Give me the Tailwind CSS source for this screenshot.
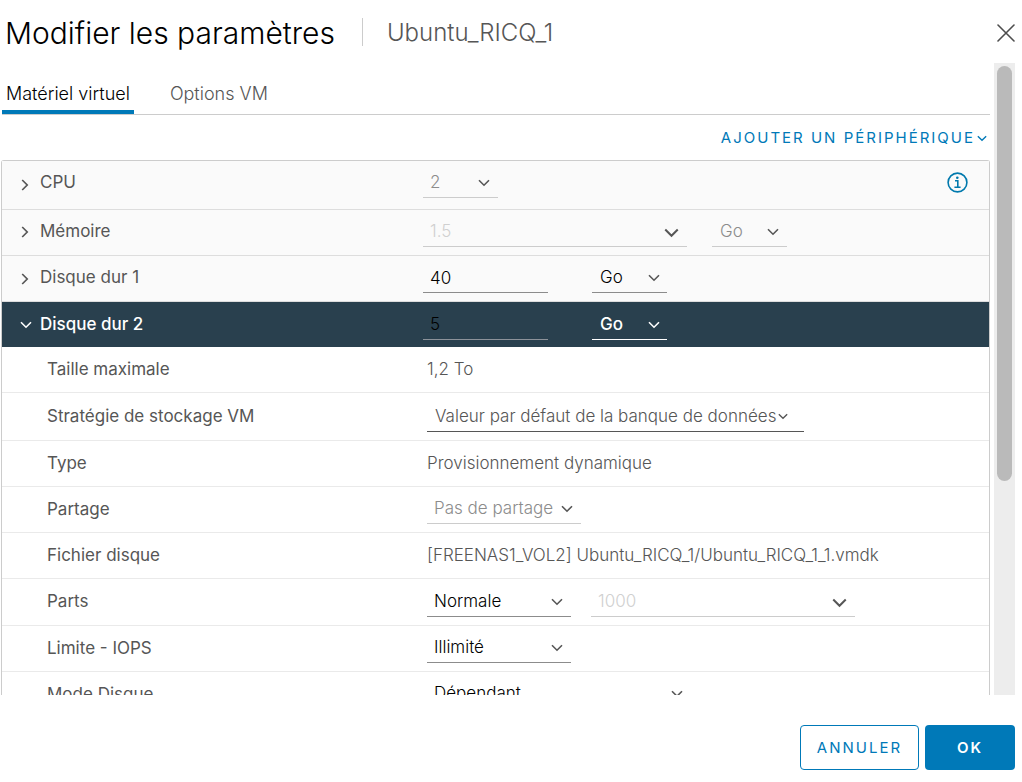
<!DOCTYPE html>
<html lang="fr">
<head>
<meta charset="utf-8">
<meta name="viewport" content="width=device-width, initial-scale=1">
<title>Modifier les paramètres</title>
<script src="https://cdn.jsdelivr.net/npm/@tailwindcss/browser@4"></script>
</head>
<body class="bg-white font-['Inter',sans-serif] text-[17px] text-[#565656]">
<svg class="hidden">
  <symbol id="down" viewBox="0 0 12 8"><path d="M1 1.2 6 6.2l5-5" fill="none" stroke="currentColor" stroke-width="1.6"/></symbol>
  <symbol id="right" viewBox="0 0 8 12"><path d="M1.2 1l5 5-5 5" fill="none" stroke="currentColor" stroke-width="1.7"/></symbol>
</svg>
<div class="flex h-screen flex-col">
  <header class="flex h-[63px] shrink-0 items-start pt-[17px] pr-[7px] pl-[5px]">
    <h1 class="text-[30px] leading-8 font-light text-black">Modifier les paramètres</h1>
    <div class="mt-px ml-[27px] h-7 border-l border-[#ccc] pl-6 text-2xl leading-[30px] font-light">Ubuntu_RICQ_1</div>
    <button type="button" aria-label="Fermer" class="mt-[7px] ml-auto">
      <svg class="size-[18px]" viewBox="0 0 18 18"><path d="M1 1l16 16M17 1L1 17" stroke="#4d4d4d" stroke-width="1.6" fill="none" stroke-linecap="round"/></svg>
    </button>
  </header>

  <div class="flex min-h-0 flex-1 justify-between gap-1 pr-[7px] pl-px">
    <main class="flex min-w-0 flex-1 flex-col overflow-hidden">
      <nav role="tablist" class="ml-px flex h-[52px] shrink-0 gap-9 border-b border-[#ccc]">
        <button type="button" role="tab" aria-selected="true" class="h-[51px] border-b-4 border-[#0079b8] px-1 pt-[14px] text-lg font-light text-black">Matériel virtuel</button>
        <button type="button" role="tab" aria-selected="false" class="h-[51px] border-b-4 border-transparent pt-[14px] text-lg font-light">Options VM</button>
      </nav>
      <div class="flex h-[45px] shrink-0 items-center justify-end pt-0.5 pr-[3px]">
        <button type="button" class="flex items-center gap-0.5 text-[15px] tracking-[2px] text-[#0079b8]">AJOUTER UN PÉRIPHÉRIQUE<svg class="h-[7px] w-[10px]"><use href="#down"/></svg></button>
      </div>

      <div class="shrink-0 rounded-t-[3px] border border-b-0 border-[#ccc]">
        <section class="flex h-[49px] border-b border-[#ddd] bg-[#fafafa] pt-1.5">
          <button type="button" class="flex h-8 w-[421px] shrink-0 items-center gap-[11px] pl-[19px]"><svg class="mt-1 h-3 w-2"><use href="#right"/></svg>CPU</button>
          <div class="relative w-[75px]">
            <select aria-label="CPU" disabled class="h-[31px] w-full appearance-none border-b border-[#ccc] pt-0.5 pl-[7px] font-light text-[#8c8c8c] opacity-100"><option>2</option></select>
            <svg class="pointer-events-none absolute top-3 right-2 h-2 w-3"><use href="#down"/></svg>
          </div>
          <button type="button" aria-label="Informations" class="mr-[21px] ml-auto flex h-[31px] items-center text-[#0079ad]">
            <svg class="size-[21px]" viewBox="0 0 21 21" fill="none" stroke="currentColor"><circle cx="10.5" cy="10.5" r="9.4" stroke-width="1.6"/><path d="M8 8.8h2.8v6.4M7.4 15.3h6.2" stroke-width="1.6"/><circle cx="10.3" cy="5.7" r="1.3" fill="currentColor" stroke="none"/></svg>
          </button>
        </section>

        <section class="flex h-[46px] border-b border-[#ddd] bg-[#fafafa] pt-1.5">
          <button type="button" class="flex h-8 w-[421px] shrink-0 items-center gap-[11px] pl-[19px]"><svg class="h-3 w-2"><use href="#right"/></svg>Mémoire</button>
          <div class="relative w-[264px]">
            <input aria-label="Mémoire" disabled value="1.5" class="h-[31px] w-full border-b border-[#ccc] pl-[7px] font-light text-[#d0d0d0]">
            <svg class="pointer-events-none absolute top-3 right-2 h-[10px] w-[15px]"><use href="#down"/></svg>
          </div>
          <div class="relative ml-[25px] w-[75px]">
            <select aria-label="Unité de mémoire" disabled class="h-[31px] w-full appearance-none border-b border-[#ccc] pt-0.5 pl-2 font-light text-[#8c8c8c] opacity-100"><option>Go</option></select>
            <svg class="pointer-events-none absolute top-3 right-2 h-2 w-3"><use href="#down"/></svg>
          </div>
        </section>

        <section class="flex h-[46px] border-b border-[#ddd] bg-[#fafafa] pt-1.5">
          <button type="button" class="flex h-8 w-[421px] shrink-0 items-center gap-[11px] pl-[19px]"><svg class="mt-0.5 h-3 w-2"><use href="#right"/></svg>Disque dur 1</button>
          <input aria-label="Taille du disque dur 1" value="40" class="h-[31px] w-[125px] border-b border-[#8c8c8c] pt-0.5 pl-[7px] font-light text-black">
          <div class="relative ml-11 w-[75px]">
            <select aria-label="Unité du disque dur 1" class="h-[31px] w-full appearance-none border-b border-[#8c8c8c] pt-0.5 pl-2 font-light text-black"><option>Go</option></select>
            <svg class="pointer-events-none absolute top-3 right-[7px] h-2 w-3"><use href="#down"/></svg>
          </div>
        </section>

        <section class="flex h-[45px] bg-[#29404e] pt-[7px] text-white">
          <button type="button" class="flex h-8 w-[421px] shrink-0 items-center gap-2 pl-[18px] font-medium"><svg class="h-2 w-3"><use href="#down"/></svg>Disque dur 2</button>
          <input aria-label="Taille du disque dur 2" disabled value="5" class="h-[31px] w-[125px] border-b border-[#8c9299] pl-[7px] font-light text-black">
          <div class="relative ml-11 w-[75px]">
            <select aria-label="Unité du disque dur 2" class="h-[31px] w-full appearance-none border-b border-white pt-0.5 pl-2 font-medium"><option>Go</option></select>
            <svg class="pointer-events-none absolute top-3 right-[7px] h-2 w-3"><use href="#down"/></svg>
          </div>
        </section>

        <dl class="leading-[33px] font-light">
          <div class="flex h-[46px] border-b border-[#eaeaea] pt-1.5">
            <dt class="w-[425px] shrink-0 pl-[45px] font-normal">Taille maximale</dt>
            <dd>1,2 To</dd>
          </div>
          <div class="flex h-12 border-b border-[#eaeaea] pt-2">
            <dt class="w-[425px] shrink-0 pl-[45px] leading-[31px] font-normal"><label for="policy">Stratégie de stockage VM</label></dt>
            <dd class="relative w-[377px]">
              <select id="policy" class="block h-[31px] w-full appearance-none border-b border-[#565656] pl-2 leading-6"><option>Valeur par défaut de la banque de données</option></select>
              <svg class="pointer-events-none absolute top-3 right-4 h-[7px] w-[10px]"><use href="#down"/></svg>
            </dd>
          </div>
          <div class="flex h-[46px] border-b border-[#eaeaea] pt-1.5">
            <dt class="w-[425px] shrink-0 pl-[45px] font-normal">Type</dt>
            <dd>Provisionnement dynamique</dd>
          </div>
          <div class="flex h-[46px] border-b border-[#eaeaea] pt-1.5">
            <dt class="w-[425px] shrink-0 pl-[45px] font-normal"><label for="sharing">Partage</label></dt>
            <dd class="relative w-[154px]">
              <select id="sharing" disabled class="block h-[31px] w-full appearance-none border-b border-[#ccc] pl-[7px] leading-6 text-[#8c8c8c] opacity-100"><option>Pas de partage</option></select>
              <svg class="pointer-events-none absolute top-3 right-2 h-2 w-3"><use href="#down"/></svg>
            </dd>
          </div>
          <div class="flex h-[46px] border-b border-[#eaeaea] pt-1.5">
            <dt class="w-[425px] shrink-0 pl-[45px] font-normal">Fichier disque</dt>
            <dd>[FREENAS1_VOL2] Ubuntu_RICQ_1/Ubuntu_RICQ_1_1.vmdk</dd>
          </div>
          <div class="flex h-[47px] border-b border-[#eaeaea] pt-[7px]">
            <dt class="w-[425px] shrink-0 pl-[45px] leading-[31px] font-normal"><label for="shares">Parts</label></dt>
            <dd class="relative w-36">
              <select id="shares" class="block h-[31px] w-full appearance-none border-b border-[#8c8c8c] pl-[7px] leading-6 text-black"><option>Normale</option></select>
              <svg class="pointer-events-none absolute top-3 right-2 h-2 w-3"><use href="#down"/></svg>
            </dd>
            <dd class="relative ml-5 w-[264px]">
              <input aria-label="Nombre de parts" disabled value="1000" class="block h-[31px] w-full border-b border-[#ccc] pl-[7px] leading-6 text-[#d0d0d0]">
              <svg class="pointer-events-none absolute top-3 right-2 h-[10px] w-[15px]"><use href="#down"/></svg>
            </dd>
          </div>
          <div class="flex h-[46px] border-b border-[#eaeaea] pt-1.5">
            <dt class="w-[425px] shrink-0 pl-[45px] font-normal"><label for="limit">Limite - IOPS</label></dt>
            <dd class="relative w-36">
              <select id="limit" class="block h-[31px] w-full appearance-none border-b border-[#8c8c8c] pl-[7px] leading-6 text-black"><option>Illimité</option></select>
              <svg class="pointer-events-none absolute top-3 right-2 h-2 w-3"><use href="#down"/></svg>
            </dd>
          </div>
          <div class="flex h-[46px] border-b border-[#eaeaea] pt-1.5">
            <dt class="w-[425px] shrink-0 pl-[45px] font-normal"><label for="mode">Mode Disque</label></dt>
            <dd class="relative w-[264px]">
              <select id="mode" class="block h-[31px] w-full appearance-none border-b border-[#8c8c8c] pl-[7px] leading-6 text-black"><option>Dépendant</option></select>
              <svg class="pointer-events-none absolute top-3 right-2 h-2 w-3"><use href="#down"/></svg>
            </dd>
          </div>
        </dl>
      </div>
    </main>
    <div class="w-[21px] shrink-0 bg-[#ededed] px-[3px] pt-[3px]" aria-hidden="true"><div class="h-[66%] rounded-full bg-[#bababa]"></div></div>
  </div>

  <footer class="flex h-[87px] shrink-0 items-start justify-end gap-1.5 pt-[30px] pr-[7px]">
    <button type="button" class="h-[45px] w-[119px] rounded-[4px] border border-[#0079b8] pt-0.5 text-[15px] tracking-[2px] text-[#0079b8]">ANNULER</button>
    <button type="button" class="h-[45px] w-[90px] rounded-[4px] bg-[#0079b8] pt-0.5 text-[15px] font-semibold tracking-[2px] text-white">OK</button>
  </footer>
</div>
</body>
</html>
